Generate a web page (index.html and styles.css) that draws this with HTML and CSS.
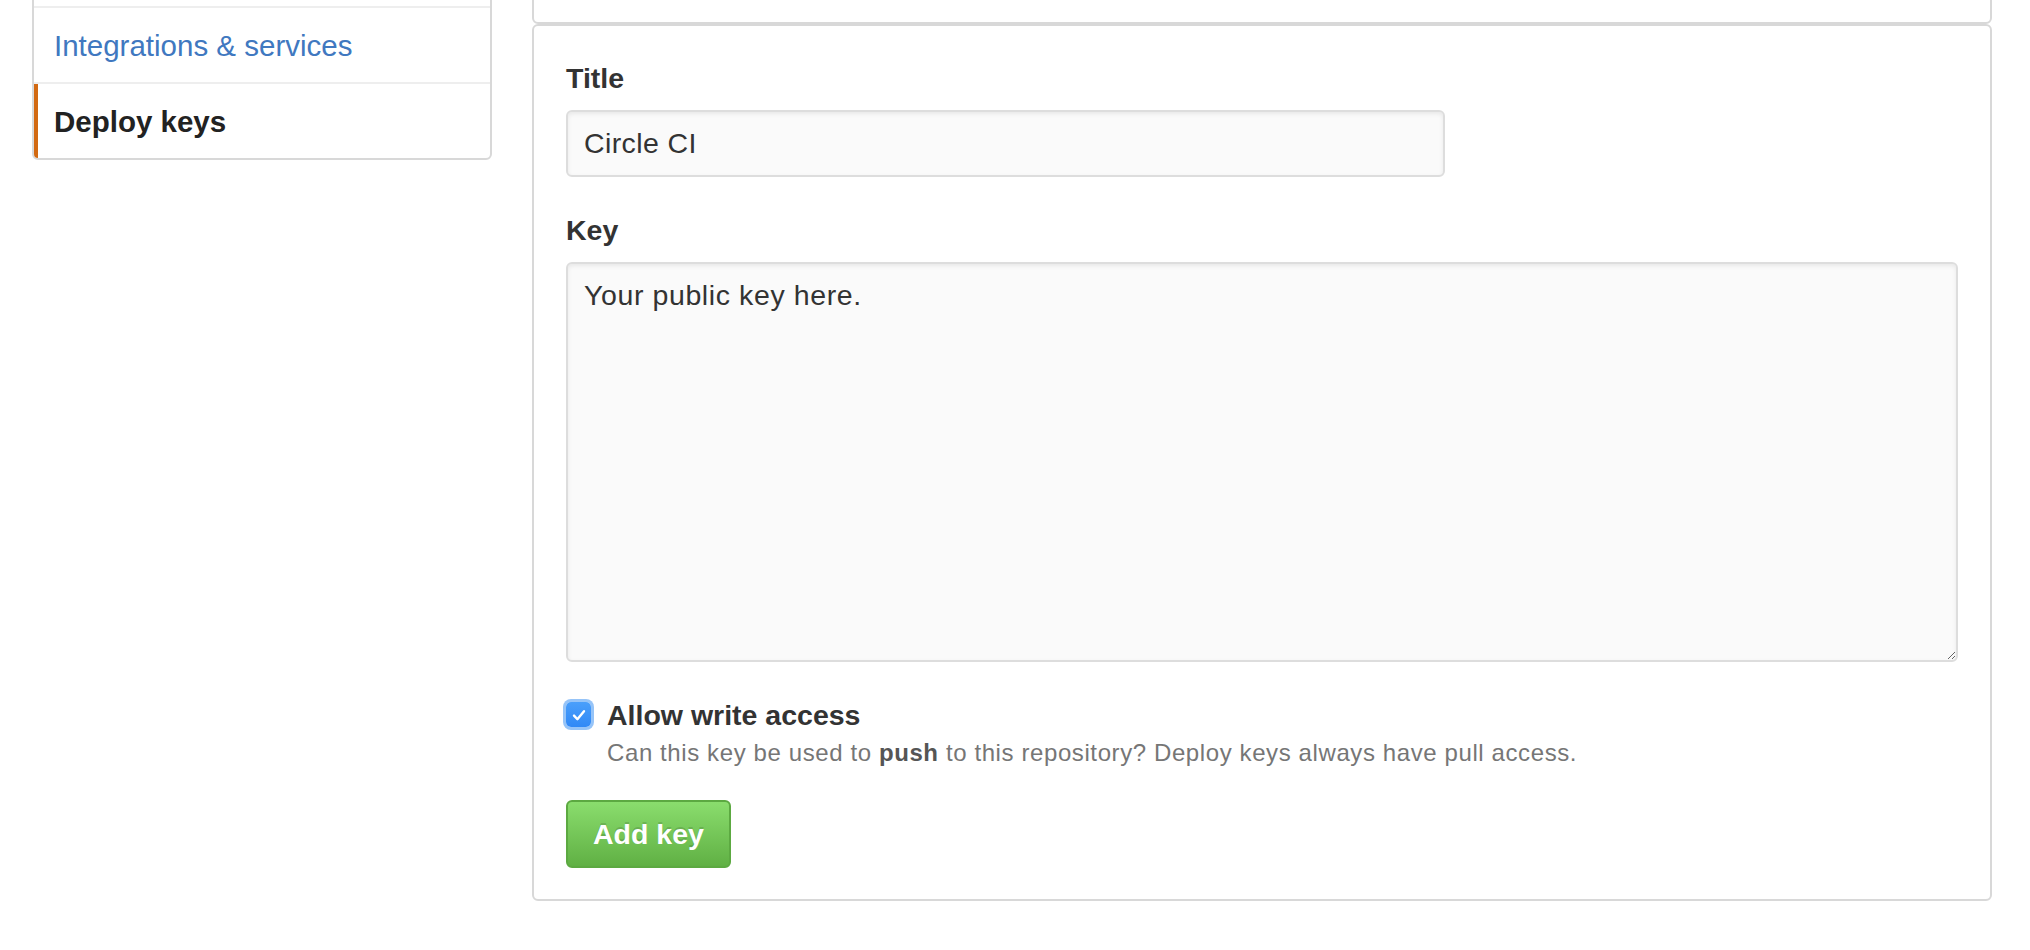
FILE: index.html
```html
<!DOCTYPE html>
<html lang="en">
<head>
<meta charset="utf-8">
<title>Deploy keys</title>
<link rel="stylesheet" href="styles.css">
</head>
<body>
<div class="layout">
  <nav class="menu">
    <div class="menu-spacer"></div>
    <a class="menu-item" href="#">Integrations &amp; services</a>
    <a class="menu-item selected" href="#">Deploy keys</a>
  </nav>
  <main class="content">
    <div class="boxed prev"></div>
    <form class="boxed form">
      <div class="form-group">
        <label class="label" for="title">Title</label>
        <input class="input" id="title" type="text" value="Circle CI">
      </div>
      <div class="form-group">
        <label class="label" for="key">Key</label>
        <textarea class="textarea" id="key">Your public key here.</textarea>
      </div>
      <div class="check-row">
        <span class="checkbox" aria-hidden="true">
          <svg width="24" height="24" viewBox="0 0 24 24"><path d="M7 12.6 L10.4 16.2 L17 8.2" fill="none" stroke="#fff" stroke-width="2.4" stroke-linecap="round" stroke-linejoin="round"/></svg>
        </span>
        <div class="check-text">
          <div class="check-label">Allow write access</div>
          <p class="note">Can this key be used to <strong>push</strong> to this repository? Deploy keys always have pull access.</p>
        </div>
      </div>
      <button class="btn-primary" type="button">Add key</button>
    </form>
  </main>
</div>
</body>
</html>
```

FILE: styles.css
```css
html, body {
  margin: 0;
  padding: 0;
  background: #fff;
}
body {
  font-family: "Liberation Sans", Arial, sans-serif;
  color: #333;
  overflow: hidden;
}
.layout {
  display: flex;
  align-items: flex-start;
  gap: 40px;
  padding-left: 32px;
}
.menu {
  width: 460px;
  box-sizing: border-box;
  margin-top: -70px;
  border: 2px solid #d8d8d8;
  border-radius: 6px;
  overflow: hidden;
  display: flex;
  flex-direction: column;
}
.menu-spacer {
  height: 74px;
}
.menu-item {
  display: block;
  padding: 17px 18px 15px 20px;
  font-size: 29.5px;
  line-height: 42px;
  color: #4078c0;
  text-decoration: none;
  border-top: 2px solid #eee;
}
.menu-item.selected {
  color: #222;
  font-weight: bold;
  box-shadow: inset 4px 0 0 #d26911;
}
.content {
  width: 1460px;
  display: flex;
  flex-direction: column;
}
.boxed {
  box-sizing: border-box;
  border: 2px solid #d8d8d8;
  border-radius: 6px;
}
.prev {
  height: 62px;
  margin-top: -38px;
}
.form {
  padding: 31px 32px 31px;
  display: flex;
  flex-direction: column;
  align-items: flex-start;
}
.form-group {
  display: flex;
  flex-direction: column;
  align-items: flex-start;
  width: 100%;
  margin-bottom: 31px;
}
.form-group + .form-group .label {
  margin-top: 1px;
}
.label {
  font-size: 28.5px;
  line-height: 42px;
  font-weight: bold;
  color: #333;
  margin-bottom: 11px;
}
.input, .textarea {
  box-sizing: border-box;
  font-family: "Liberation Sans", Arial, sans-serif;
  font-size: 28.5px;
  line-height: 42px;
  letter-spacing: 0.4px;
  color: #333;
  background: #fafafa;
  border: 2px solid #ddd;
  border-radius: 6px;
  box-shadow: inset 0 2px 4px rgba(0, 0, 0, 0.075);
  padding: 10px 16px;
  margin: 0;
  outline: none;
}
.input {
  width: 879px;
  height: 67px;
}
.textarea {
  width: 100%;
  height: 400px;
  resize: vertical;
  display: block;
  letter-spacing: 0.6px;
}
.check-row {
  display: flex;
  align-items: flex-start;
  gap: 13px;
  margin-top: 2px;
  margin-left: -3px;
}
.checkbox {
  width: 25px;
  height: 25px;
  margin: 7px 3px 0;
  border-radius: 5px;
  background: linear-gradient(#4a9ffb, #3189f6);
  box-shadow: 0 0 0 3px #96c4f8;
  display: flex;
  align-items: center;
  justify-content: center;
}
.checkbox svg {
  display: block;
}
.check-text {
  display: flex;
  flex-direction: column;
}
.check-label {
  font-size: 28.5px;
  line-height: 40px;
  font-weight: bold;
  color: #333;
}
.note {
  margin: 0;
  font-size: 24px;
  line-height: 36px;
  letter-spacing: 0.6px;
  color: #767676;
}
.note strong {
  color: #555;
}
.btn-primary {
  margin-top: 29px;
  box-sizing: border-box;
  height: 68px;
  padding: 12px 25px;
  font-family: "Liberation Sans", Arial, sans-serif;
  font-size: 28.5px;
  line-height: 40px;
  font-weight: bold;
  color: #fff;
  text-shadow: 0 -2px 0 rgba(0, 0, 0, 0.15);
  background-color: #60b044;
  background-image: linear-gradient(#8add6d, #60b044);
  border: 2px solid #5ca941;
  border-radius: 6px;
  cursor: pointer;
}
```
